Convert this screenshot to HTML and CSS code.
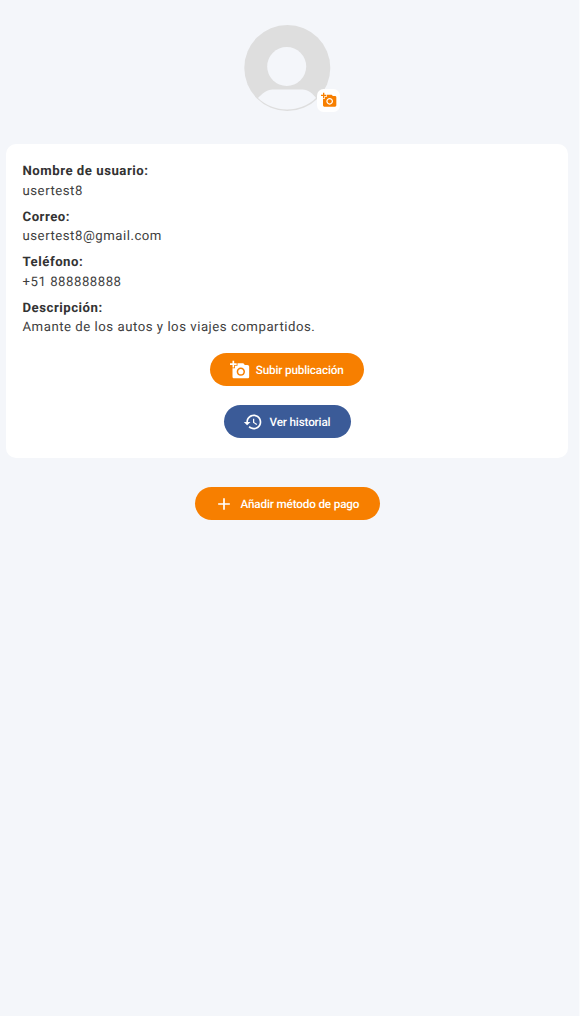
FILE: index.html
```html
<!DOCTYPE html>
<html lang="es">
<head>
<meta charset="utf-8">
<title>Perfil</title>
<link rel="stylesheet" href="styles.css">
</head>
<body>
<main class="profile">
  <div class="avatar">
    <svg class="avatar-image" viewBox="0 0 86 86">
      <circle cx="43.3" cy="43" r="43" fill="#dedede"/>
      <circle cx="42.7" cy="41.500" r="19.500" fill="#f4f6fa"/>
      <path d="M14 73C18.500 68.500 23 64.500 28.500 64.500H58.500C64 64.500 68.500 68.500 72 73C64 80.500 54 84.500 43 84.500S22 80.500 14 73Z" fill="#f4f6fa"/>
    </svg>
    <button class="avatar-edit" aria-label="Cambiar foto">
      <svg class="icon-small" viewBox="0 0 24 24"><path d="M3 4V1h2v3h3v2H5v3H3V6H0V4h3zm3 6V7h3V4h7l1.830 2H21c1.100 0 2 .9 2 2v12c0 1.100-.9 2-2 2H5c-1.100 0-2-.9-2-2V10h3zm7 9c2.760 0 5-2.240 5-5s-2.240-5-5-5-5 2.240-5 5 2.240 5 5 5zm-3.200-5c0 1.770 1.430 3.200 3.200 3.200s3.200-1.430 3.200-3.200-1.430-3.200-3.200-3.200-3.200 1.430-3.200 3.200z"/></svg>
    </button>
  </div>
  <section class="card">
    <dl class="details">
      <dt>Nombre de usuario:</dt><dd>usertest8</dd>
      <dt>Correo:</dt><dd>usertest8@gmail.com</dd>
      <dt>Teléfono:</dt><dd>+51 888888888</dd>
      <dt>Descripción:</dt><dd>Amante de los autos y los viajes compartidos.</dd>
    </dl>
    <button class="button upload">
      <svg class="icon" viewBox="0 0 24 24"><path d="M3 4V1h2v3h3v2H5v3H3V6H0V4h3zm3 6V7h3V4h7l1.830 2H21c1.100 0 2 .9 2 2v12c0 1.100-.9 2-2 2H5c-1.100 0-2-.9-2-2V10h3zm7 9c2.760 0 5-2.240 5-5s-2.240-5-5-5-5 2.240-5 5 2.240 5 5 5zm-3.200-5c0 1.770 1.430 3.200 3.200 3.200s3.200-1.430 3.200-3.200-1.430-3.200-3.200-3.200-3.200 1.430-3.200 3.200z"/></svg>
      <span>Subir publicación</span>
    </button>
    <button class="button history">
      <svg class="icon" viewBox="0 0 24 24"><path d="M13 3c-4.970 0-9 4.030-9 9H1l3.890 3.890.07.14L9 12H6c0-3.870 3.130-7 7-7s7 3.130 7 7-3.130 7-7 7c-1.930 0-3.680-.79-4.940-2.060l-1.420 1.420C8.270 19.990 10.510 21 13 21c4.970 0 9-4.030 9-9s-4.030-9-9-9zm-1 5v5l4.280 2.540.72-1.210-3.500-2.080V8H12z"/></svg>
      <span>Ver historial</span>
    </button>
  </section>
  <button class="button payment">
    <svg class="icon" viewBox="0 0 24 24"><path d="M19 13h-6v6h-2v-6H5v-2h6V5h2v6h6v2z"/></svg>
    <span>Añadir método de pago</span>
  </button>
</main>
</body>
</html>
```
FILE: styles.css
```css
* { box-sizing: border-box; }
body {
  margin: 0;
  min-height: 1016px;
  border-right: 1px solid #fafbfd;
  background: #f4f6fa;
  font-family: Roboto, sans-serif;
  color: #333;
  text-rendering: geometricPrecision;
}
.profile {
  display: flex;
  flex-direction: column;
  align-items: center;
  width: 562px;
  margin-left: 6px;
  padding-top: 25px;
}
.avatar {
  position: relative;
  width: 86px;
  height: 86px;
}
.avatar-image { display: block; width: 86px; height: 86px; overflow: visible; }
.avatar-edit {
  position: absolute;
  right: -10px;
  bottom: -1px;
  display: flex;
  align-items: center;
  justify-content: center;
  width: 23px;
  height: 23px;
  padding: 0 0 1px;
  border: 0;
  border-radius: 6.500px;
  background: #fff;
  color: #f77f00;
}
.icon-small { width: 16px; height: 16px; fill: currentColor; }
.card {
  display: flex;
  flex-direction: column;
  align-items: center;
  width: 100%;
  height: 313.600px;
  margin-top: 33.400px;
  padding: 17.600px 16.500px 0;
  border-radius: 10px;
  background: #fff;
}
.details {
  width: 100%;
  margin: 0;
  font-size: 13.200px;
  line-height: 19.700px;
  letter-spacing: 0.520px;
}
.details dt { font-weight: 700; }
.details dd { margin: 0 0 6.200px; color: #3e3e3e; }
.button {
  display: flex;
  align-items: center;
  height: 33px;
  padding: 0 20px;
  border: 0;
  border-radius: 17px;
  background: #f77f00;
  color: #fff;
  font: 500 11.700px/16px Roboto, sans-serif;
  letter-spacing: -0.150px;
  text-rendering: geometricPrecision;
  white-space: nowrap;
}
.icon { flex: none; width: 20px; height: 20px; margin-left: -0.500px; margin-right: 6.500px; fill: currentColor; }
.upload { width: 154.500px; flex: none; margin-top: 8.800px; }
.upload .icon { margin-left: 0; margin-right: 6px; }
.history { width: 127px; flex: none; margin-top: 19.300px; background: #3b5b98; }
.payment { width: 185px; margin-top: 29.300px; }
```
